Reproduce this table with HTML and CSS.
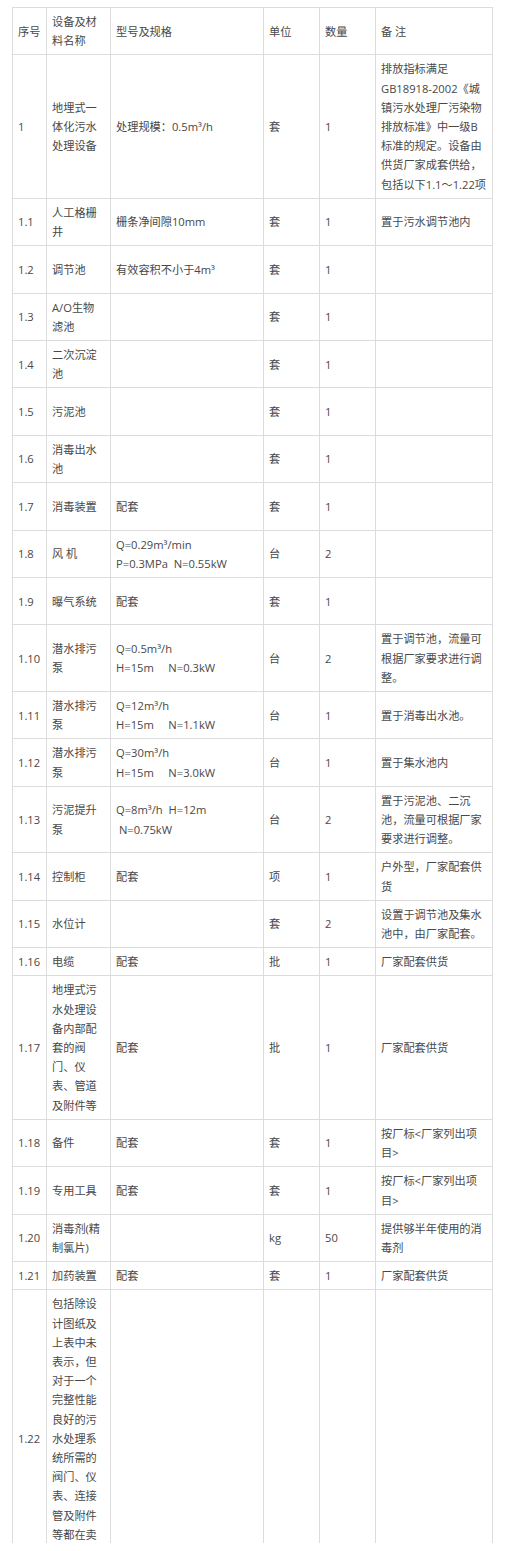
FILE: index.html
```html
<!DOCTYPE html>
<html lang="zh-CN">
<head>
<meta charset="utf-8">
<title>设备及材料表</title>
<link rel="stylesheet" href="styles.css">
</head>
<body>
<div class="page">
<div class="clip">
<table class="spec">
<colgroup>
<col class="c-no"><col class="c-name"><col class="c-model"><col class="c-unit"><col class="c-qty"><col class="c-note">
</colgroup>
<tbody>
<tr><td>序号</td><td>设备及材料名称</td><td>型号及规格</td><td>单位</td><td>数量</td><td>备&nbsp;注</td></tr>
<tr><td>1</td><td>地埋式一体化污水处理设备</td><td>处理规模：0.5m³/h</td><td>套</td><td>1</td><td>排放指标满足GB18918-2002《城镇污水处理厂污染物排放标准》中一级B标准的规定。设备由供货厂家成套供给，包括以下1.1～1.22项</td></tr>
<tr><td>1.1</td><td>人工格栅井</td><td>栅条净间隙10mm</td><td>套</td><td>1</td><td>置于污水调节池内</td></tr>
<tr class="tall"><td>1.2</td><td>调节池</td><td>有效容积不小于4m³</td><td>套</td><td>1</td><td></td></tr>
<tr><td>1.3</td><td>A/O生物滤池</td><td></td><td>套</td><td>1</td><td></td></tr>
<tr><td>1.4</td><td>二次沉淀池</td><td></td><td>套</td><td>1</td><td></td></tr>
<tr class="tall"><td>1.5</td><td>污泥池</td><td></td><td>套</td><td>1</td><td></td></tr>
<tr><td>1.6</td><td>消毒出水池</td><td></td><td>套</td><td>1</td><td></td></tr>
<tr class="tall"><td>1.7</td><td>消毒装置</td><td>配套</td><td>套</td><td>1</td><td></td></tr>
<tr><td>1.8</td><td>风&nbsp;机</td><td>Q=0.29m³/min<br>P=0.3MPa&nbsp;&nbsp;N=0.55kW</td><td>台</td><td>2</td><td></td></tr>
<tr class="tall"><td>1.9</td><td>曝气系统</td><td>配套</td><td>套</td><td>1</td><td></td></tr>
<tr><td>1.10</td><td>潜水排污泵</td><td>Q=0.5m³/h<br>H=15m&nbsp;&nbsp;&nbsp;&nbsp;&nbsp;N=0.3kW</td><td>台</td><td>2</td><td>置于调节池，流量可根据厂家要求进行调整。</td></tr>
<tr><td>1.11</td><td>潜水排污泵</td><td>Q=12m³/h<br>H=15m&nbsp;&nbsp;&nbsp;&nbsp;&nbsp;N=1.1kW</td><td>台</td><td>1</td><td>置于消毒出水池。</td></tr>
<tr><td>1.12</td><td>潜水排污泵</td><td>Q=30m³/h<br>H=15m&nbsp;&nbsp;&nbsp;&nbsp;&nbsp;N=3.0kW</td><td>台</td><td>1</td><td>置于集水池内</td></tr>
<tr><td>1.13</td><td>污泥提升泵</td><td>Q=8m³/h&nbsp;&nbsp;H=12m<br>&nbsp;N=0.75kW</td><td>台</td><td>2</td><td>置于污泥池、二沉池，流量可根据厂家要求进行调整。</td></tr>
<tr><td>1.14</td><td>控制柜</td><td>配套</td><td>项</td><td>1</td><td>户外型，厂家配套供货</td></tr>
<tr><td>1.15</td><td>水位计</td><td></td><td>套</td><td>2</td><td>设置于调节池及集水池中，由厂家配套。</td></tr>
<tr><td>1.16</td><td>电缆</td><td>配套</td><td>批</td><td>1</td><td>厂家配套供货</td></tr>
<tr><td>1.17</td><td>地埋式污水处理设备内部配套的阀门、仪表、管道及附件等</td><td>配套</td><td>批</td><td>1</td><td>厂家配套供货</td></tr>
<tr><td>1.18</td><td>备件</td><td>配套</td><td>套</td><td>1</td><td>按厂标&lt;厂家列出项目&gt;</td></tr>
<tr><td>1.19</td><td>专用工具</td><td>配套</td><td>套</td><td>1</td><td>按厂标&lt;厂家列出项目&gt;</td></tr>
<tr><td>1.20</td><td>消毒剂(精制氯片)</td><td></td><td>kg</td><td>50</td><td>提供够半年使用的消毒剂</td></tr>
<tr><td>1.21</td><td>加药装置</td><td>配套</td><td>套</td><td>1</td><td>厂家配套供货</td></tr>
<tr><td>1.22</td><td>包括除设计图纸及上表中未表示，但对于一个完整性能良好的污水处理系统所需的阀门、仪表、连接管及附件等都在卖方供货范围内</td><td></td><td></td><td></td><td></td></tr>
</tbody>
</table>
</div>
</div>
</body>
</html>
```
FILE: styles.css
```css
html, body {
  margin: 0;
  padding: 0;
  background: #ffffff;
}

.page {
  padding: 7px 0 8px 12px;
}

.clip {
  height: 1536px;
  overflow: hidden;
}

.spec {
  border-collapse: collapse;
  table-layout: fixed;
  width: 480px;
  font-family: "Open Sans", "Noto Sans CJK SC", sans-serif;
  font-size: 11.2px;
  line-height: 19.2px;
  color: #484848;
}

.c-no { width: 34px; }
.c-name { width: 64px; }
.c-model { width: 153px; }
.c-unit { width: 56px; }
.c-qty { width: 56px; }
.c-note { width: 117px; }

.spec td {
  border: 1px solid #dcdcdc;
  padding: 4px 5px;
  vertical-align: middle;
  text-align: left;
  word-break: normal;
  overflow-wrap: break-word;
}

.spec tr.tall td {
  height: 38.4px;
}
```
